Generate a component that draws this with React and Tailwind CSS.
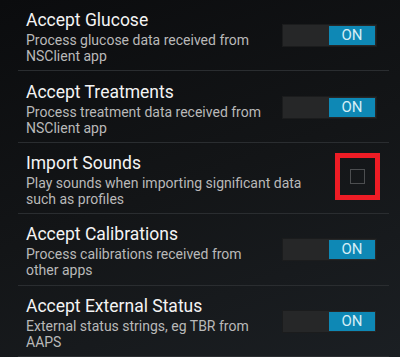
import React, { useState } from 'react';

const prefs = [
    { title: 'Accept Glucose', summary: ['Process glucose data received from', 'NSClient app'], kind: 'switch', on: true },
    { title: 'Accept Treatments', summary: ['Process treatment data received from', 'NSClient app'], kind: 'switch', on: true },
    { title: 'Import Sounds', summary: ['Play sounds when importing significant data', 'such as profiles'], kind: 'check', on: false, marked: true },
    { title: 'Accept Calibrations', summary: ['Process calibrations received from', 'other apps'], kind: 'switch', on: true },
    { title: 'Accept External Status', summary: ['External status strings, eg TBR from', 'AAPS'], kind: 'switch', on: true },
];

const Switch = ({ on, onToggle }) => (
    <button
        type="button"
        onClick={onToggle}
        className="flex h-[23px] w-[95px] shrink-0 items-stretch border border-[#1b1c1d] bg-[#262728] p-px"
    >
        {on && <span className="flex-1" />}
        <span
            className={`flex w-[46px] items-center justify-center text-[15px] leading-none ${on ? 'bg-[#0e88b5] text-[#d6eef6]' : 'bg-[#3a3b3c] text-[#9a9a9a]'}`}
        >
            {on ? 'ON' : 'OFF'}
        </span>
        {!on && <span className="flex-1" />}
    </button>
);

const Check = ({ on, onToggle, marked }) => (
    <div className={`flex h-[47px] w-[45px] shrink-0 items-center justify-center ${marked ? 'border-[5px] border-[#ee1c25]' : ''}`}>
        <button
            type="button"
            onClick={onToggle}
            className="flex h-[15px] w-[15px] items-center justify-center border border-[#4c4e50]"
        >
            {on && <span className="h-[7px] w-[7px] bg-[#0e88b5]" />}
        </button>
    </div>
);

export default function App() {
    const [state, setState] = useState(prefs.map((p) => p.on));
    const flip = (i) => setState((s) => s.map((v, j) => (j === i ? !v : v)));

    return (
        <div
            className="h-[357px] w-[400px] overflow-hidden bg-[linear-gradient(160deg,#0b0c0e_0%,#131517_50%,#1b1f23_100%)] pl-[18px] pr-[11px]"
            style={{ fontFamily: 'Roboto, "Noto Sans", sans-serif' }}
        >
            {prefs.map((p, i) => (
                <div key={p.title} className="flex h-[71.4px] items-center border-b border-[#2a2d30] pl-2">
                    <div className="flex-1 pt-[3px]">
                        <div className="text-[17.5px] leading-[22px] text-[#f4f4f4]">{p.title}</div>
                        <div className="mt-[1px] text-[14px] leading-[16px] text-[#b9b9b9]">
                            {p.summary.map((l) => (
                                <div key={l}>{l}</div>
                            ))}
                        </div>
                    </div>
                    {p.kind === 'switch' ? (
                        <div className="mr-3 pt-px">
                            <Switch on={state[i]} onToggle={() => flip(i)} />
                        </div>
                    ) : (
                        <div className="mr-[9px] mt-[-2px]">
                            <Check on={state[i]} marked={p.marked} onToggle={() => flip(i)} />
                        </div>
                    )}
                </div>
            ))}
        </div>
    );
}
